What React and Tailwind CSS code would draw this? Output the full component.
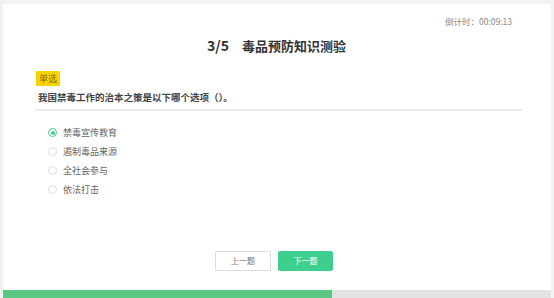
import { useState } from 'react';

const options = ['禁毒宣传教育', '遏制毒品来源', '全社会参与', '依法打击'];

const Radio = ({ checked }) => (
    <span className={`w-[9px] h-[9px] rounded-full border flex items-center justify-center shrink-0
        ${checked ? 'border-[#3ecf8e]' : 'border-[#dcdcdc]'}`}>
        {checked && <span className="w-[4px] h-[4px] rounded-full bg-[#3ecf8e]" />}
    </span>
);

const App = () => {
    const [selected, setSelected] = useState(0);

    return (
        <div className="w-[554px] h-[298px] bg-[#f2f2f2] pt-[4px] pl-[3px] pr-[3px] font-['Noto_Sans_CJK_SC','Noto_Sans',sans-serif]">
            <div className="h-full bg-white flex flex-col">
                <div className="flex justify-end pt-[13px] pr-[39px] h-[28px] text-[8.5px] text-[#888] leading-none">
                    倒计时：00:09:13
                </div>
                <h1 className="flex justify-center items-center gap-[13px] text-[13px] font-bold text-[#333] leading-none mt-[6px] -ml-[1px] h-[14px]">
                    <span className="text-[14px]">3/5</span>
                    <span>毒品预防知识测验</span>
                </h1>

                <div className="pl-[32px] pr-[29px] mt-[11px]">
                    <span className="inline-flex items-center ml-[1px] px-[3px] h-[15px] bg-[#f7d400] text-[9px] text-[#8a6d00] leading-none">单选</span>
                    <p className="text-[9.5px] font-bold text-[#444] leading-none mt-[6px] pl-[3px]">
                        我国禁毒工作的治本之策是以下哪个选项（）。
                    </p>
                    <div className="h-[2px] bg-[#ececec] mt-[6px]" />

                    <ul className="mt-[17px] pl-[13px] flex flex-col gap-[9px]">
                        {options.map((opt, i) => (
                            <li key={opt} onClick={() => setSelected(i)}
                                className="flex items-center gap-[6px] text-[9px] text-[#666] leading-[10px] cursor-pointer">
                                <Radio checked={selected === i} />
                                {opt}
                            </li>
                        ))}
                    </ul>
                </div>

                <div className="flex justify-center gap-[7px] mt-auto mb-[19px] -ml-[6px]">
                    <button className="w-[56px] h-[20px] border border-[#dcdcdc] bg-white text-[8px] text-[#777] rounded-[1px]">上一题</button>
                    <button className="w-[55px] h-[20px] bg-[#3ecf8e] text-[8px] text-white rounded-[2px]">下一题</button>
                </div>

                <div className="h-[8px] bg-[#e3e3e3] flex">
                    <div className="w-[329px] bg-[#5ac782]" />
                </div>
            </div>
        </div>
    );
};

export default App;
